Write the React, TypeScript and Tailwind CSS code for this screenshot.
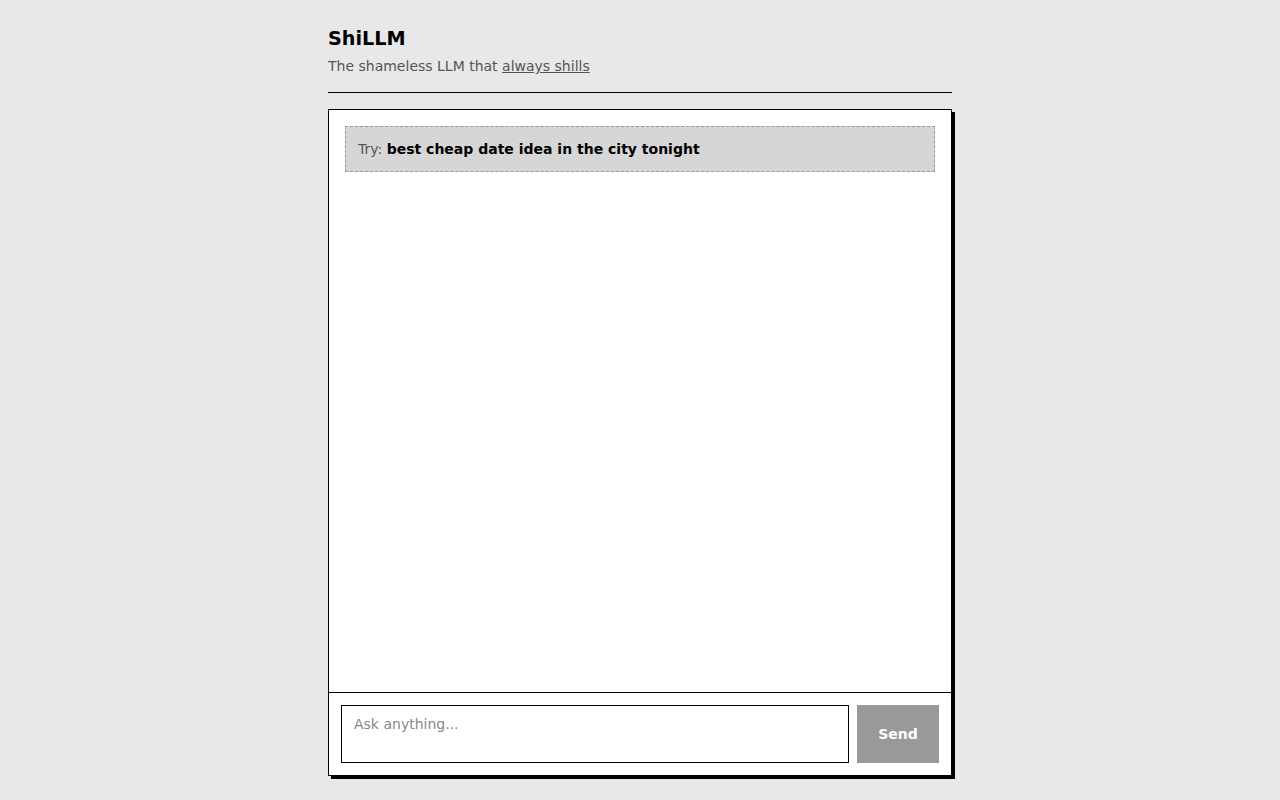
import { useState } from "react";

export default function App() {
  const [value, setValue] = useState("");

  return (
    <div className="min-h-screen bg-[#e8e8e8] font-['DejaVu_Sans',sans-serif] text-black">
      <div className="mx-auto w-[624px] pt-6">
        <header className="border-b border-black pb-4">
          <h1 className="pt-px text-[19.2px] leading-7 font-bold">ShiLLM</h1>
          <p className="mt-[3px] text-sm leading-5 text-[#555]">
            The shameless LLM that{" "}
            <a href="#" className="underline">
              always shills
            </a>
          </p>
        </header>

        <main className="mt-4 flex h-[667px] flex-col border border-black bg-white shadow-[3px_3px_0_#000]">
          <div className="flex-1 overflow-y-auto p-4">
            <button className="w-full border border-dashed border-[#999] bg-[#d6d6d6] px-3 py-3 text-left text-sm leading-5">
              <span className="text-[#555]">Try: </span>
              <span className="font-bold">best cheap date idea in the city tonight</span>
            </button>
          </div>

          <div className="flex gap-2 border-t border-black p-3">
            <textarea
              value={value}
              onChange={(e) => setValue(e.target.value)}
              placeholder="Ask anything..."
              className="h-[58px] flex-1 resize-none border border-black px-3 py-2 text-sm leading-5 outline-none placeholder:text-[#888]"
            />
            <button className="w-[82px] bg-[#999] text-sm font-bold text-white">
              Send
            </button>
          </div>
        </main>
      </div>
    </div>
  );
}
